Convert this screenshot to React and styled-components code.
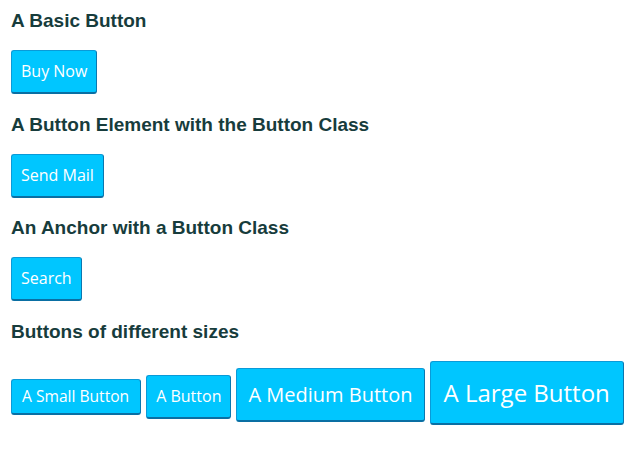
import React from 'react'
import styled, { createGlobalStyle, css } from 'styled-components'

const GlobalStyle = createGlobalStyle`
  html, body {
    margin: 0;
    padding: 0;
    background: #fff;
  }
`

const Page = styled.div`
  padding: 10px 12px 0 11px;
  display: flex;
  flex-direction: column;
`

const Section = styled.section`
  display: flex;
  flex-direction: column;
  align-items: flex-start;
  margin-bottom: 19.5px;
`

const Heading = styled.h3`
  margin: 0 0 19px 0;
  font-family: 'Liberation Sans', Arial, sans-serif;
  font-size: 19px;
  line-height: 21px;
  font-weight: 700;
  color: #173c3c;
`

const sizes = {
  small: css`
    font-size: 15.6px;
    line-height: 21px;
    padding: 6px 11px 6px 10px;
  `,
  normal: css`
    font-size: 16px;
    line-height: 22px;
    padding: 9px 9px 10px;
  `,
  medium: css`
    font-size: 20px;
    line-height: 27px;
    padding: 12px 11px 12px 11px;
  `,
  large: css`
    font-size: 24px;
    line-height: 33px;
    padding: 14px 13px 14px;
  `,
}

const buttonStyle = css`
  display: inline-block;
  box-sizing: border-box;
  font-family: 'Open Sans', sans-serif;
  font-weight: 400;
  color: #fff;
  text-decoration: none;
  background: #00c6ff;
  border: 1px solid #0a9ad8;
  border-right-color: #0a78b0;
  border-bottom: 2px solid #0a6fa3;
  border-radius: 3px;
  cursor: pointer;
  white-space: nowrap;
  ${({ $size }) => sizes[$size || 'normal']}
`

const Button = styled.button`
  ${buttonStyle}
`

const LinkButton = styled.a`
  ${buttonStyle}
`

const BasicButton = styled.span`
  ${buttonStyle}
`

const SizeRow = styled.div`
  display: flex;
  align-items: baseline;
  gap: 5px;
`

export default function App() {
  return (
    <>
      <GlobalStyle />
      <Page>
        <Section>
          <Heading>A Basic Button</Heading>
          <BasicButton>Buy Now</BasicButton>
        </Section>
        <Section>
          <Heading>A Button Element with the Button Class</Heading>
          <Button>Send Mail</Button>
        </Section>
        <Section>
          <Heading>An Anchor with a Button Class</Heading>
          <LinkButton href="#">Search</LinkButton>
        </Section>
        <Section>
          <Heading>Buttons of different sizes</Heading>
          <SizeRow>
            <BasicButton $size="small">A Small Button</BasicButton>
            <BasicButton>A Button</BasicButton>
            <BasicButton $size="medium">A Medium Button</BasicButton>
            <BasicButton $size="large">A Large Button</BasicButton>
          </SizeRow>
        </Section>
      </Page>
    </>
  )
}
